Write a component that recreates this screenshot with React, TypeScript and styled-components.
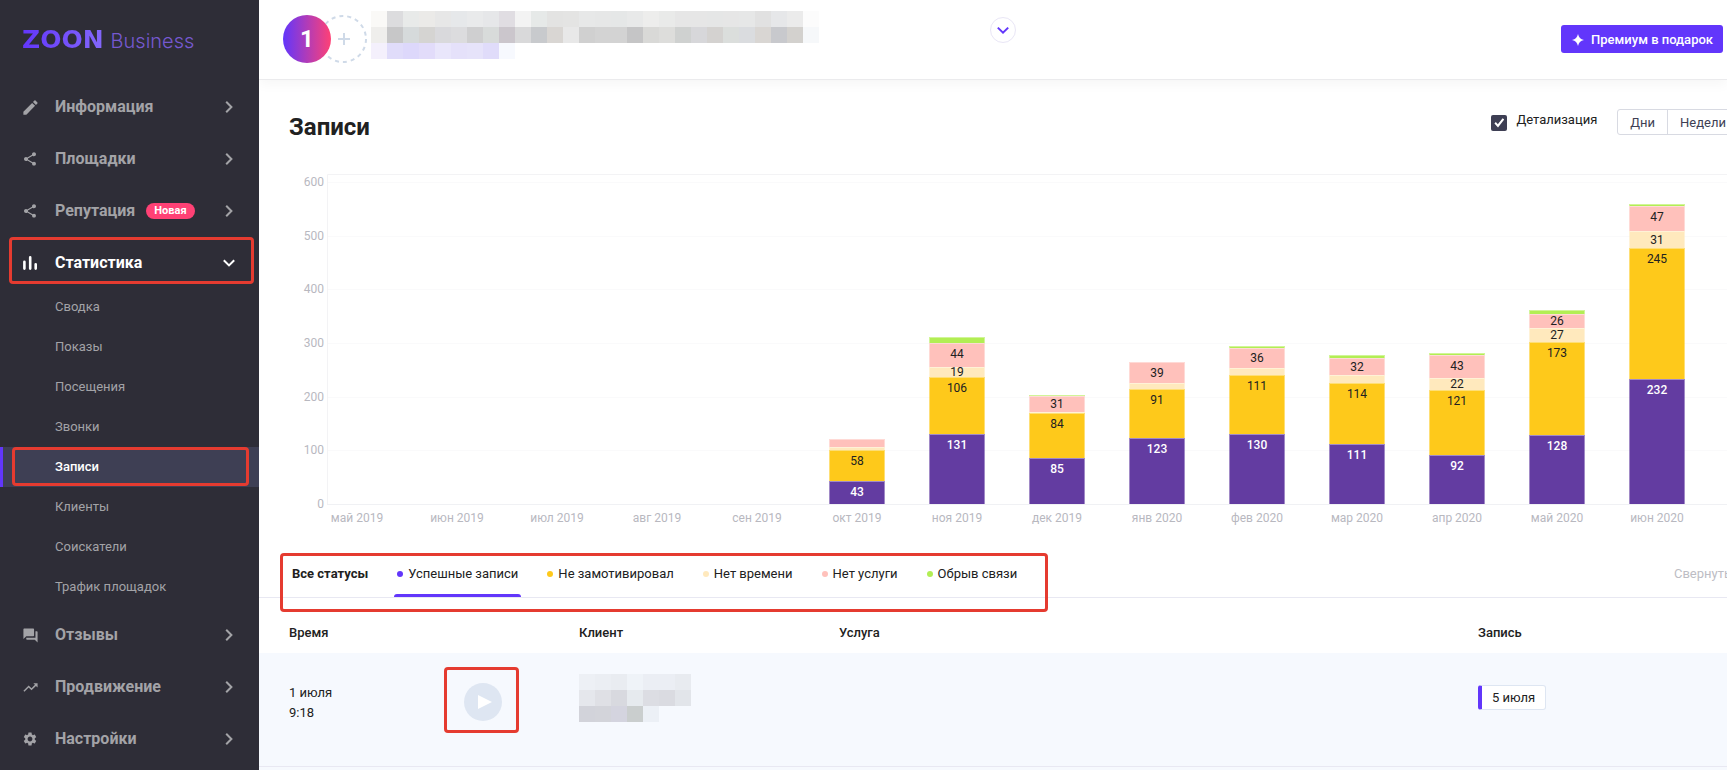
import React from "react";
import styled, { createGlobalStyle, css } from "styled-components";
import { MdEdit, MdForum, MdSettings, MdShare, MdTrendingUp } from "react-icons/md";

const GlobalStyle = createGlobalStyle`
  *, *::before, *::after { box-sizing: border-box; }
  body {
    margin: 0;
    background: #fff;
    color: #212121;
    font-family: Roboto, "Liberation Sans", sans-serif;
    font-size: 13px;
    line-height: 20px;
  }
  button { font: inherit; color: inherit; background: none; border: 0; padding: 0; cursor: pointer; }
  ul { list-style: none; margin: 0; padding: 0; }
  a { color: inherit; text-decoration: none; }
`;

const Page = styled.div`
  display: flex;
  min-height: 100vh;
  overflow: hidden;
`;

/* Red frame that highlights a part of the interface */
const Highlight = styled.span<{ $inset: string; $width?: number; $height?: number }>`
  position: absolute;
  inset: ${(p) => p.$inset};
  width: ${(p) => (p.$width ? `${p.$width}px` : "auto")};
  height: ${(p) => (p.$height ? `${p.$height}px` : "auto")};
  border: 3px solid #e53b30;
  border-radius: 4px;
  pointer-events: none;
`;

/* ---------- Sidebar ---------- */

const Sidebar = styled.aside`
  flex: 0 0 259px;
  background: #2e2d37;
  color: #a3a3a7;
`;

const Logo = styled.a`
  display: flex;
  align-items: baseline;
  gap: 7px;
  height: 81px;
  padding: 24px 0 0 22px;
  line-height: 32px;
`;

const LogoMark = styled.span`
  font-family: "DejaVu Sans", sans-serif;
  font-size: 25px;
  font-weight: 700;
  background: linear-gradient(90deg, #6236fb, #8468fb);
  background-clip: text;
  color: transparent;
`;

const LogoWord = styled.span`
  font-family: Inter, sans-serif;
  font-size: 20px;
  font-weight: 300;
  color: #7659d0;
`;

const NavItem = styled.li`
  position: relative;
`;

const NavButton = styled.button<{ $active?: boolean }>`
  display: flex;
  align-items: center;
  width: 100%;
  height: 52px;
  padding: 0 24px 0 20px;
  font-size: 16px;
  font-weight: 700;
  color: ${(p) => (p.$active ? "#fff" : "inherit")};
`;

const IconSlot = styled.span`
  display: flex;
  justify-content: center;
  width: 20px;
  margin-right: 15px;
`;

const ArrowSlot = styled.span`
  display: flex;
  justify-content: center;
  width: 12px;
  margin-left: auto;
`;

const Badge = styled.span`
  margin-left: 11px;
  padding: 0 8px;
  border-radius: 8px;
  background: #ff4175;
  color: #fff;
  font-size: 11px;
  line-height: 16px;
`;

const SubList = styled.ul`
  margin: -2px 0 2px;
`;

const SubItem = styled.li`
  position: relative;
`;

const SubLink = styled.a<{ $active?: boolean }>`
  display: block;
  padding-left: 55px;
  line-height: 40px;
  ${(p) =>
    p.$active &&
    css`
      padding-left: 52px;
      border-left: 3px solid #6236fb;
      background: #3e3f54;
      color: #fff;
      font-weight: 500;
    `}
`;

const BarsIcon = () => (
  <svg width="14" height="14" viewBox="0 0 14 14" stroke="currentColor" strokeWidth="2.6" strokeLinecap="round">
    <path d="M1.4 5.8v6.8M7.2 1.4v11.2M12.7 8.2v4.4" />
  </svg>
);

const ArrowRight = () => (
  <svg width="8" height="12" viewBox="0 0 8 12" fill="none" stroke="currentColor" strokeWidth="2">
    <path d="M1.2 0.8 6.4 6l-5.2 5.2" />
  </svg>
);

const ArrowDown = () => (
  <svg width="12" height="8" viewBox="0 0 12 8" fill="none" stroke="currentColor" strokeWidth="2">
    <path d="M0.8 1.2 6 6.4l5.2-5.2" />
  </svg>
);

type Section = { title: string; icon: React.ReactNode; badge?: string; items?: string[] };

const sections: Section[] = [
  { title: "Информация", icon: <MdEdit size={19} /> },
  { title: "Площадки", icon: <MdShare size={16} /> },
  { title: "Репутация", icon: <MdShare size={16} />, badge: "Новая" },
  {
    title: "Статистика",
    icon: <BarsIcon />,
    items: ["Сводка", "Показы", "Посещения", "Звонки", "Записи", "Клиенты", "Соискатели", "Трафик площадок"],
  },
  { title: "Отзывы", icon: <MdForum size={17} /> },
  { title: "Продвижение", icon: <MdTrendingUp size={17} /> },
  { title: "Настройки", icon: <MdSettings size={16} /> },
];

const Navigation = () => (
  <nav>
    <ul>
      {sections.map((s) => (
        <NavItem key={s.title}>
          <NavButton type="button" $active={!!s.items}>
            <IconSlot>{s.icon}</IconSlot>
            {s.title}
            {s.badge && <Badge>{s.badge}</Badge>}
            <ArrowSlot>{s.items ? <ArrowDown /> : <ArrowRight />}</ArrowSlot>
          </NavButton>
          {s.items && (
            <>
              <Highlight $inset="0 5px auto 9px" $height={47} />
              <SubList>
                {s.items.map((item) => (
                  <SubItem key={item}>
                    <SubLink href="#" $active={item === "Записи"}>
                      {item}
                    </SubLink>
                    {item === "Записи" && <Highlight $inset="0 10px 1px 12px" />}
                  </SubItem>
                ))}
              </SubList>
            </>
          )}
        </NavItem>
      ))}
    </ul>
  </nav>
);

/* ---------- Header ---------- */

const Main = styled.main`
  display: flex;
  flex-direction: column;
  flex: 1;
  min-width: 0;
  overflow: hidden;
`;

const Header = styled.header`
  display: flex;
  align-items: flex-start;
  height: 80px;
  padding: 11px 4px 0 24px;
  border-bottom: 1px solid #ebebed;
  box-shadow: 0 4px 12px rgba(0, 0, 0, 0.04);
`;

const Avatar = styled.span`
  z-index: 1;
  width: 48px;
  margin-top: 4px;
  border-radius: 50%;
  background: linear-gradient(90deg, #6236fb, #ff4175);
  color: #fff;
  font-size: 24px;
  font-weight: 700;
  line-height: 48px;
  text-align: center;
`;

const AddButton = styled.button`
  width: 48px;
  height: 48px;
  margin: 4px 4px 0 -12px;
  color: #cfdae8;
`;

const MosaicGrid = styled.div<{ $cols: number }>`
  display: grid;
  grid-template-columns: repeat(${(p) => p.$cols}, 16px);
  grid-auto-rows: 16px;
`;

const Cell = styled.span<{ $color: string }>`
  background: ${(p) => p.$color};
`;

const Mosaic = ({ rows }: { rows: string[][] }) => {
  const cols = Math.max(...rows.map((r) => r.length));
  return (
    <MosaicGrid $cols={cols} aria-hidden>
      {rows.flatMap((row, y) =>
        Array.from({ length: cols }, (_, x) => <Cell key={`${y}-${x}`} $color={row[x] ?? "transparent"} />),
      )}
    </MosaicGrid>
  );
};

const companyMosaic = [
  "#faf9f7 #dcdcde #e8eae9 #ebeae8 #e7e7e7 #e6e8ea #e9eaeb #e6e7e9 #e0dde2 #f3f3f3 #e6e9e8 #e3e3e2 #e4e4e3 #e7e8e8 #e6e7e7 #e5e7e7 #e8e9e9 #ededec #e9eae9 #e6e6e6 #e6e6e6 #e5e6e6 #e6e6e6 #e6e7e7 #e1e1e1 #e6e7e9 #ebebeb #fcfcfc",
  "#efeeec #c7c7c8 #d6dadb #d5d4d2 #d9d9dc #dcdcde #cfcfd0 #d8dbda #cbc6cc #d9d9da #c8cacd #d9d6d3 #e8e8e8 #d0d0d0 #d3d3d3 #d3d3d3 #c5c5c6 #d9d9d7 #dddddb #cfd1d0 #d7d7da #d4d2d0 #dbdedc #dadcdf #d9d6d3 #c8c9cd #d3d1ce #f6f8fa",
  "#f4f0fc #e0dcfa #ddd8fb #e2dcfa #e9e6fb #e5e1fa #e6e3fa #e0dcfa #f7f9fe",
].map((r) => r.split(" "));

const ExpandButton = styled.button`
  display: flex;
  align-items: center;
  justify-content: center;
  width: 26px;
  height: 26px;
  margin: 6px 0 0 171px;
  border: 1px solid #e9e6f6;
  border-radius: 50%;
  color: #6236fb;
`;

const PremiumButton = styled.button`
  display: flex;
  align-items: center;
  gap: 7px;
  height: 28px;
  margin: 14px 0 0 auto;
  padding: 1px 10px 0 11px;
  border-radius: 3px;
  background: #6236fb;
  color: #fff;
  font-weight: 500;
  white-space: nowrap;
`;

/* ---------- Title bar ---------- */

const TitleBar = styled.div`
  display: flex;
  align-items: flex-start;
  justify-content: space-between;
  padding: 29px 0 0 30px;
  height: 80px;
`;

const Title = styled.h1`
  margin: 2px 0 0;
  font-size: 24px;
  font-weight: 700;
  line-height: 32px;
`;

const Controls = styled.div`
  display: flex;
  align-items: flex-start;
  margin-right: -12px;
`;

const CheckLabel = styled.label`
  display: flex;
  gap: 9px;
  margin: 1px 20px 0 0;
`;

const Checkbox = styled.input`
  appearance: none;
  width: 16px;
  height: 16px;
  margin: 5px 0 0;
  border-radius: 2px;
  background: #3e3f54;
  display: grid;
  place-items: center;
  &:checked::before {
    content: "";
    width: 10px;
    height: 10px;
    background: #fff;
    clip-path: polygon(0 55%, 14% 40%, 34% 62%, 82% 2%, 98% 14%, 36% 96%);
  }
`;

const Segmented = styled.div`
  display: flex;
  border: 1px solid #d8dae2;
  border-radius: 3px;
`;

const SegmentButton = styled.button`
  height: 24px;
  padding: 2px 12px 0;
  color: #3e3f54;
  & + & {
    border-left: 1px solid #d8dae2;
  }
`;

/* ---------- Chart ---------- */

const ChartBox = styled.div`
  height: 388px;
  padding-left: 30px;
  overflow: hidden;
`;

const ChartSvg = styled.svg`
  display: block;
  text {
    font-size: 12px;
    text-anchor: middle;
  }
`;

const AxisText = styled.text<{ $end?: boolean }>`
  && {
    fill: #b8b8bf;
    text-anchor: ${(p) => (p.$end ? "end" : "middle")};
  }
`;

const series = [
  { name: "Успешные записи", bar: "#633ca1", dot: "#6236fb" },
  { name: "Не замотивировал", bar: "#fec91b", dot: "#fec91b" },
  { name: "Нет времени", bar: "#ffe9bd", dot: "#ffe9bd" },
  { name: "Нет услуги", bar: "#ffc1bb", dot: "#ffc1bb" },
  { name: "Обрыв связи", bar: "#b2ee54", dot: "#b2ee54" },
];

const months: { label: string; values: number[] }[] = [
  { label: "май 2019", values: [] },
  { label: "июн 2019", values: [] },
  { label: "июл 2019", values: [] },
  { label: "авг 2019", values: [] },
  { label: "сен 2019", values: [] },
  { label: "окт 2019", values: [43, 58, 5, 15, 0] },
  { label: "ноя 2019", values: [131, 106, 19, 44, 11] },
  { label: "дек 2019", values: [85, 84, 2, 31, 1] },
  { label: "янв 2020", values: [123, 91, 11, 39, 1] },
  { label: "фев 2020", values: [130, 111, 13, 36, 4] },
  { label: "мар 2020", values: [111, 114, 15, 32, 5] },
  { label: "апр 2020", values: [92, 121, 22, 43, 4] },
  { label: "май 2020", values: [128, 173, 27, 26, 7] },
  { label: "июн 2020", values: [232, 245, 31, 47, 4] },
];

const BASE = 344;
const UNIT = 322 / 600;
const LEFT = 38;
const MIN_LABELLED = 19;

const Chart = () => (
  <ChartSvg width="1500" height="380" role="img" aria-label="Записи по месяцам">
    {[0, 100, 200, 300, 400, 500, 600].map((v) => {
      const y = Math.round(BASE - v * UNIT);
      return (
        <g key={v}>
          <path d={`M${LEFT} ${y + 0.5}H1500`} stroke={v ? "#fafafb" : "#f0f1f4"} />
          <AxisText x={35} y={y + 4} $end>
            {v}
          </AxisText>
        </g>
      );
    })}
    <path d={`M${LEFT + 0.5} ${BASE}V14.5H1500`} fill="none" stroke="#f3f3f5" />
    {months.map((m, i) => {
      const cx = 68 + i * 100;
      let sum = 0;
      return (
        <g key={m.label}>
          {m.values.map((v, s) => {
            const bottom = Math.round(BASE - sum * UNIT);
            sum += v;
            const top = Math.round(BASE - sum * UNIT);
            const h = bottom - top;
            if (h === 0) return null;
            return (
              <g key={s}>
                <rect x={cx - 28} y={top} width="56" height={h} fill={series[s].bar} fillOpacity="0.6" />
                {h > 1 && <rect x={cx - 27} y={top + 1} width="54" height={h - 1} fill={series[s].bar} />}
              </g>
            );
          })}
          {m.values.map((v, s) => {
            if (v < MIN_LABELLED || s === 4) return null;
            const total = m.values.slice(0, s + 1).reduce((a, b) => a + b, 0);
            const y = Math.round(BASE - total * UNIT + Math.min(11, (v * UNIT) / 2)) + 4;
            return (
              <text key={s} x={cx} y={y} fill={s ? "#212121" : "#fff"} fontWeight={s ? 400 : 500}>
                {v}
              </text>
            );
          })}
          <AxisText x={cx} y={362}>
            {m.label}
          </AxisText>
        </g>
      );
    })}
  </ChartSvg>
);

/* ---------- Status tabs ---------- */

const TabBar = styled.div`
  position: relative;
  display: flex;
  gap: 23px;
  height: 50px;
  padding-left: 30px;
  border-bottom: 1px solid #e8e8f2;
`;

const Tab = styled.button<{ $active?: boolean; $bold?: boolean }>`
  display: flex;
  align-items: center;
  gap: 5px;
  padding: 6px 3px 0;
  border-bottom: 3px solid transparent;
  font-weight: ${(p) => (p.$bold ? 700 : 400)};
  white-space: nowrap;
  position: relative;
  &::after {
    content: "";
    position: absolute;
    inset: auto 0 -3px;
    height: 3px;
    border-radius: 3px 3px 0 0;
    background: ${(p) => (p.$active ? "#6236fb" : "transparent")};
  }
`;

const Dot = styled.span<{ $color: string }>`
  width: 6px;
  height: 6px;
  border-radius: 50%;
  background: ${(p) => p.$color};
`;

const CollapseButton = styled.button`
  margin: 0 -4px 0 auto;
  padding-top: 2px;
  color: #bdbdc4;
  white-space: nowrap;
`;

/* ---------- Table ---------- */

const TableArea = styled.div`
  flex: 1;
  background: #f6f9fe;
`;

const Table = styled.table`
  width: 100%;
  table-layout: fixed;
  border-collapse: collapse;
  text-align: left;
  thead {
    background: #fff;
  }
`;

const Th = styled.th<{ $width?: number }>`
  width: ${(p) => (p.$width ? `${p.$width}px` : "auto")};
  height: 55px;
  padding: 14px 0 0;
  font-weight: 500;
  &:first-child {
    padding-left: 30px;
  }
`;

const Td = styled.td<{ $top: number }>`
  height: 113px;
  padding: ${(p) => p.$top}px 0 0;
  border-bottom: 1px solid #e8e8f2;
  vertical-align: top;
  &:first-child {
    padding-left: 30px;
  }
`;

const PlayWrap = styled.div`
  position: relative;
  width: 38px;
  height: 38px;
`;

const PlayButton = styled.button`
  display: flex;
  align-items: center;
  justify-content: center;
  width: 38px;
  height: 38px;
  padding-left: 3px;
  border-radius: 50%;
  background: #dee6f2;
`;

const DateTag = styled.a`
  display: inline-block;
  padding: 0 10px;
  border: 1px solid #dee6f2;
  border-left: 4px solid #6236fb;
  border-radius: 3px;
  background: #fff;
  line-height: 23px;
`;

const clientMosaic = [
  "#edf0f5 #ebeef3 #e9ecf1 #eff3f8 #ebeef4 #ebeef4 #e8ebf0",
  "#e5e7ec #dfe0e5 #d8d9df #e6eaee #dcdde3 #dadbe1 #e2e5ea",
  "#d2d3da #d3d4da #d4d4df #cacece #ecf0f6",
].map((r) => r.split(" "));

export default function App() {
  return (
    <Page>
      <GlobalStyle />
      <Sidebar>
        <Logo href="#">
          <LogoMark>ZOON</LogoMark>
          <LogoWord>Business</LogoWord>
        </Logo>
        <Navigation />
      </Sidebar>
      <Main>
        <Header>
          <Avatar>1</Avatar>
          <AddButton type="button" aria-label="Добавить">
            <svg width="48" height="48" viewBox="0 0 48 48" fill="none" stroke="currentColor" strokeWidth="2">
              <circle cx="24" cy="24" r="23" strokeDasharray="4 4" />
              <path d="M25 18v12M19 24h12" />
            </svg>
          </AddButton>
          <Mosaic rows={companyMosaic} />
          <ExpandButton type="button" aria-label="Выбрать компанию">
            <svg width="12" height="8" viewBox="0 0 12 8" fill="none" stroke="currentColor" strokeWidth="2">
              <path d="M0.8 1.6 6 6.6l5.2-5" />
            </svg>
          </ExpandButton>
          <PremiumButton type="button">
            <svg width="12" height="12" viewBox="0 0 12 12" fill="currentColor">
              <path d="M6 0C6.8 3.4 8.4 5.2 12 6 8.4 6.8 6.8 8.6 6 12 5.2 8.6 3.6 6.8 0 6 3.6 5.2 5.2 3.4 6 0z" />
            </svg>
            Премиум в подарок
          </PremiumButton>
        </Header>

        <TitleBar>
          <Title>Записи</Title>
          <Controls>
            <CheckLabel>
              <Checkbox type="checkbox" defaultChecked />
              Детализация
            </CheckLabel>
            <Segmented>
              <SegmentButton type="button">Дни</SegmentButton>
              <SegmentButton type="button">Недели</SegmentButton>
            </Segmented>
          </Controls>
        </TitleBar>

        <ChartBox>
          <Chart />
        </ChartBox>

        <TabBar>
          <Tab type="button" $bold>
            Все статусы
          </Tab>
          {series.map((s, i) => (
            <Tab key={s.name} type="button" $active={i === 0}>
              <Dot $color={s.dot} />
              {s.name}
            </Tab>
          ))}
          <CollapseButton type="button">Свернуть</CollapseButton>
          <Highlight $inset="5px auto -15px 21px" $width={768} />
        </TabBar>

        <TableArea>
          <Table>
            <thead>
              <tr>
                <Th $width={205}>Время</Th>
                <Th $width={115} aria-label="Запись разговора" />
                <Th $width={260}>Клиент</Th>
                <Th>Услуга</Th>
                <Th $width={249}>Запись</Th>
              </tr>
            </thead>
            <tbody>
              <tr>
                <Td $top={30}>
                  1 июля
                  <br />
                  9:18
                </Td>
                <Td $top={30}>
                  <PlayWrap>
                    <PlayButton type="button" aria-label="Прослушать">
                      <svg width="14" height="14" viewBox="0 0 14 14" fill="#fff">
                        <path d="M0 0l14 7-14 7z" />
                      </svg>
                    </PlayButton>
                    <Highlight $inset="-16px -17px -12px -20px" />
                  </PlayWrap>
                </Td>
                <Td $top={21}>
                  <Mosaic rows={clientMosaic} />
                </Td>
                <Td $top={30} />
                <Td $top={32}>
                  <DateTag href="#">5 июля</DateTag>
                </Td>
              </tr>
            </tbody>
          </Table>
        </TableArea>
      </Main>
    </Page>
  );
}
